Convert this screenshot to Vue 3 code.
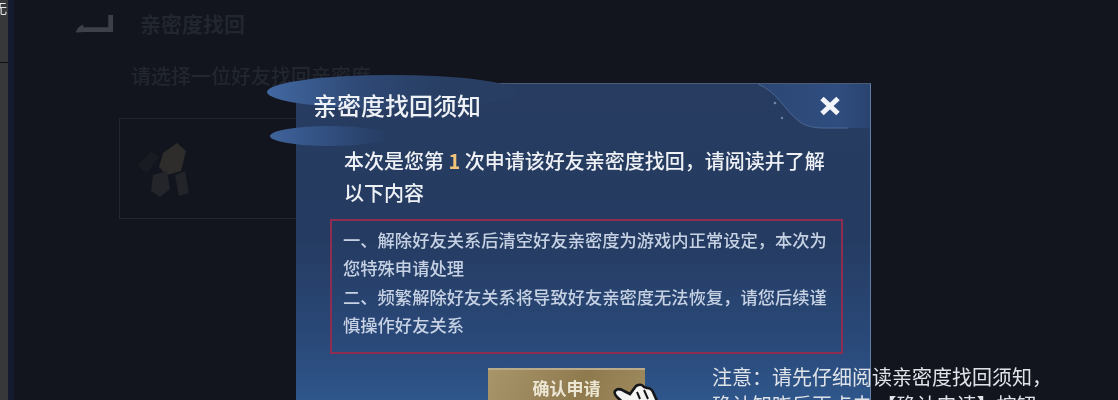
<script setup>
const rules = [
  '一、解除好友关系后清空好友亲密度为游戏内正常设定，本次为',
  '您特殊申请处理',
  '二、频繁解除好友关系将导致好友亲密度无法恢复，请您后续谨',
  '慎操作好友关系'
]
</script>

<template>
  <main class="screen">
    <aside class="edge">
      <span class="edge-glyph">无</span>
    </aside>

    <section class="backdrop">
      <header class="back-row">
        <svg class="back-icon" viewBox="0 0 42 20" aria-hidden="true">
          <path d="M35 1h5v18H10L1 19.500c0-3 3-6 7-8.500l1 3h26z" fill="#3d4048" />
        </svg>
        <span class="back-title">亲密度找回</span>
      </header>
      <p class="prompt">请选择一位好友找回亲密度</p>
      <div class="friend-card">
        <svg class="avatar" viewBox="0 0 70 60" aria-hidden="true">
          <path d="M2 27 16 12l8 6-12 16z" fill="#191b22" />
          <path d="M28 14 42 4l9 8-5 20-14 4-8-8z" fill="#2e2d2b" />
          <path d="M18 36l14-4 3 18-10 8-9-6z" fill="#23252b" />
          <path d="M40 36l10-4 4 22-10 3z" fill="#22242a" />
        </svg>
      </div>
    </section>

    <section class="dialog">
      <div class="wave wave-top"></div>
      <div class="wave wave-bottom"></div>
      <svg class="corner" viewBox="0 0 112 45" aria-hidden="true">
        <defs>
          <linearGradient id="cornerFade" x1="0" x2="1" y1="0" y2="0">
            <stop offset="0" stop-color="#2b4774" />
            <stop offset="0.7" stop-color="#2f4d7f" />
            <stop offset="1" stop-color="#2a4470" />
          </linearGradient>
        </defs>
        <path d="M0 0C20 8 26 26 42 38 47 42 56 44 66 44H112V0z" fill="url(#cornerFade)" />
        <path d="M0 0C20 8 26 26 42 38 47 42 56 44 66 44H90" fill="none" stroke="#4a6896" stroke-width="1" />
        <circle cx="17" cy="19" r="1.300" fill="#6c86ad" />
        <circle cx="24" cy="34" r="1.200" fill="#6c86ad" />
      </svg>
      <svg class="close" viewBox="0 0 22 20" aria-hidden="true">
        <path d="M3 2.500 19 17.500M19 2.500 3 17.500" stroke="#f2f5f9" stroke-width="5" />
      </svg>

      <h1 class="dialog-title">亲密度找回须知</h1>
      <p class="intro">本次是您第 <b>1</b> 次申请该好友亲密度找回，请阅读并了解<br />以下内容</p>

      <div class="rules">
        <p v-for="line in rules" :key="line">{{ line }}</p>
      </div>

      <button class="confirm" type="button">确认申请</button>
    </section>

    <svg class="hand" viewBox="0 0 46 26" aria-hidden="true">
      <path d="M3 8c3-3 6-2 9 0l6 3 6-8c4-2 7-1 8 1l3 1c3 0 5 2 6 4l4 9v8H18L5 14C3 12 2 10 3 8z" fill="#f4f4f2" stroke="#15161a" stroke-width="2.600" />
      <path d="M25 9l3 7M32 7l4 9" stroke="#15161a" stroke-width="2" fill="none" />
    </svg>

    <p class="note">注意：请先仔细阅读亲密度找回须知，<br />确认知晓后再点击 【确认申请】按钮</p>
  </main>
</template>

<style scoped>
.screen {
  position: relative;
  display: flex;
  width: 1118px;
  height: 400px;
  overflow: hidden;
  background: #12151e;
  font-family: "Noto Sans CJK SC", "Noto Sans", sans-serif;
  filter: blur(0.5px);
}

.edge {
  position: relative;
  flex: none;
  width: 8px;
  height: 400px;
  background: #37383a;
  overflow: hidden;
}

.edge::after {
  content: "";
  position: absolute;
  top: 62px;
  left: 0;
  width: 8px;
  height: 1px;
  background: #111;
}

.edge-glyph {
  position: absolute;
  top: 1px;
  left: -6px;
  color: #e5e5e5;
  font-size: 13px;
  line-height: 14px;
}

.backdrop {
  flex: 1;
  min-width: 0;
  padding: 10px 0 0 61px;
  border-left: 6px solid #151b2e;
}

.back-row {
  display: flex;
  align-items: center;
  gap: 25px;
  height: 26px;
}

.back-icon {
  width: 40px;
  height: 19px;
  margin-top: 0;
}

.back-title {
  color: #22262f;
  font-size: 21px;
  font-weight: 700;
  line-height: 26px;
}

.prompt {
  margin: 27px 0 0 56px;
  color: #22262f;
  font-size: 20px;
  font-weight: 500;
  line-height: 26px;
}

.friend-card {
  display: flex;
  align-items: center;
  width: 200px;
  height: 99px;
  margin: 29px 0 0 44px;
  border: 1px solid #23262e;
}

.avatar {
  width: 70px;
  height: 60px;
  margin-left: 15px;
}

.dialog {
  position: absolute;
  top: 83px;
  left: 296px;
  box-sizing: border-box;
  width: 575px;
  height: 340px;
  padding: 7px 28px 0 35px;
  border-top: 1px solid #4a5b78;
  border-right: 1px solid #5f7ea9;
  background: linear-gradient(180deg, #273c60 0%, #253b61 45%, #2a4a7b 78%, #315c92 100%);
}

.wave {
  position: absolute;
  border-radius: 50%;
}

.wave-top {
  top: -9px;
  left: -29px;
  width: 250px;
  height: 34px;
  background: linear-gradient(90deg, #4268a2, #2f4a77 35%, #283e63 70%);
}

.wave-bottom {
  top: 42px;
  left: -26px;
  width: 120px;
  height: 20px;
  background: linear-gradient(90deg, #3f639c, #2e4a78 60%, #263c61);
}

.corner {
  position: absolute;
  top: 0;
  right: 0;
  width: 112px;
  height: 45px;
}

.close {
  position: absolute;
  top: 12px;
  right: 29px;
  width: 22px;
  height: 20px;
}

.dialog-title {
  position: relative;
  margin: 0 0 0 -18px;
  color: #eef1f5;
  font-size: 24px;
  font-weight: 500;
  line-height: 28px;
  white-space: nowrap;
}

.intro {
  position: relative;
  margin: 26px 0 0 13px;
  color: #eef1f5;
  font-size: 20px;
  font-weight: 500;
  line-height: 32px;
  white-space: nowrap;
}

.intro b {
  color: #efc37a;
  font-weight: 700;
}

.rules {
  box-sizing: border-box;
  width: 513px;
  height: 135px;
  margin: 10px 0 0 -1px;
  padding: 5px 0 0 11px;
  border: 2px solid #8e2d4f;
  color: #c6d2e3;
  font-size: 17.300px;
  font-weight: 500;
  line-height: 28.400px;
  white-space: nowrap;
}

.rules p {
  margin: 0;
}

.confirm {
  display: block;
  width: 157px;
  height: 60px;
  margin: 14px 0 0 157px;
  padding: 0 0 22px;
  border: 0;
  border-top: 2px solid #b9ab88;
  background: linear-gradient(115deg, #a8966a, #8f7a4e 55%, #a08d60);
  color: #ece6d4;
  font: 700 17px/24px "Noto Sans CJK SC", "Noto Sans", sans-serif;
}

.hand {
  position: absolute;
  top: 383px;
  left: 612px;
  width: 46px;
  height: 26px;
}

.note {
  position: absolute;
  top: 363px;
  left: 712px;
  margin: 0;
  color: #dfe3e8;
  font-size: 20px;
  line-height: 28px;
  white-space: nowrap;
}
</style>
